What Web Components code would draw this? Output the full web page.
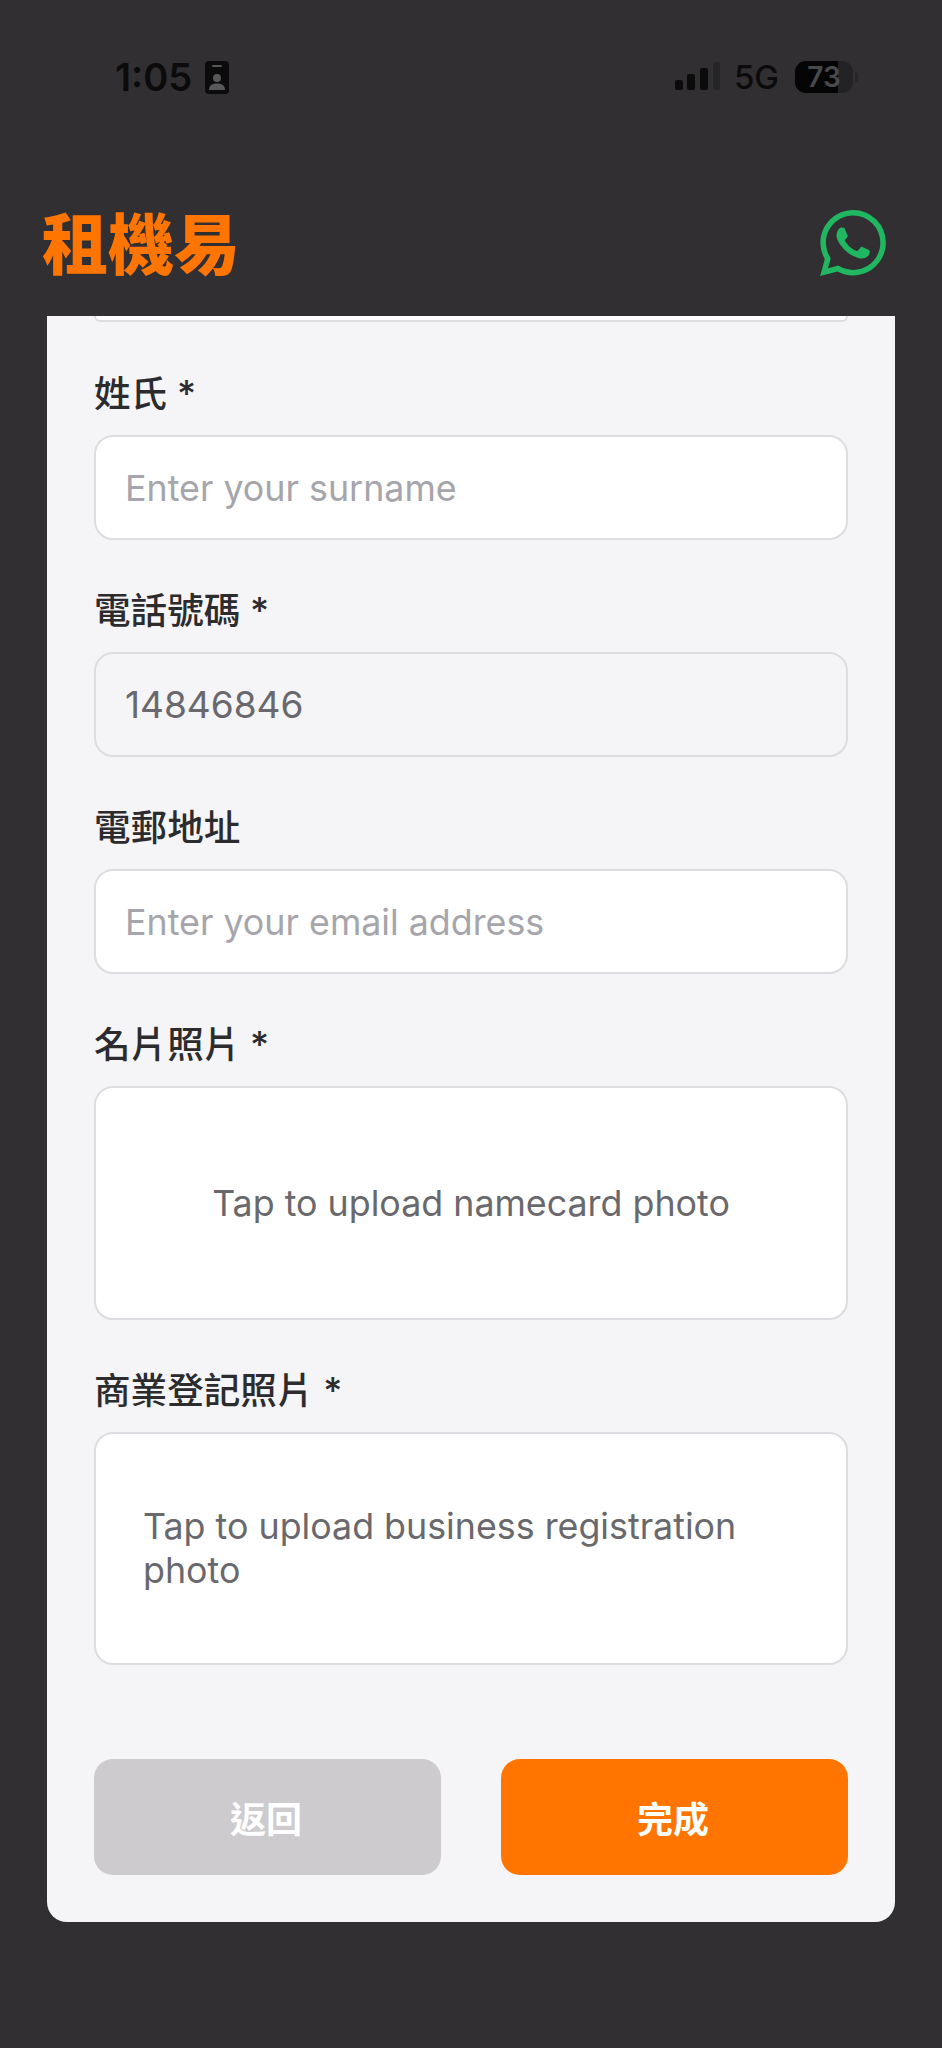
<!DOCTYPE html>
<html lang="zh-Hant">
<head>
<meta charset="utf-8">
<title>租機易</title>
<style>
html, body { margin: 0; background: #312f32; }
body { width: 942px; height: 2048px; overflow: hidden; font-family: Inter, "Noto Sans CJK TC", sans-serif; }
</style>
</head>
<body>
<status-bar></status-bar>
<app-header></app-header>
<form-card>
  <form-field label="姓氏 *"><text-box placeholder>Enter your surname</text-box></form-field>
  <form-field label="電話號碼 *"><text-box disabled>14846846</text-box></form-field>
  <form-field label="電郵地址"><text-box placeholder>Enter your email address</text-box></form-field>
  <form-field label="名片照片 *"><upload-box>Tap to upload namecard photo</upload-box></form-field>
  <form-field label="商業登記照片 *"><upload-box>Tap to upload business registration photo</upload-box></form-field>
  <div slot="actions" style="display:flex;justify-content:space-between">
    <action-button kind="back">返回</action-button>
    <action-button kind="done">完成</action-button>
  </div>
</form-card>

<script>
class StatusBar extends HTMLElement {
  constructor() {
    super();
    this.attachShadow({ mode: "open" });
    this.shadowRoot.innerHTML = `
<style>
:host { display: flex; justify-content: space-between; align-items: center; box-sizing: border-box; height: 34px; margin-top: 60px; padding: 0 84px 0 115px; color: #0b0b0c; font-family: Inter, sans-serif; }
.side { display: flex; align-items: center; }
.time { font-size: 38px; font-weight: 600; line-height: 34px; }
.net { font-size: 33px; font-weight: 500; margin: 0 16px 0 13px; line-height: 34px; }
.batt { position: relative; width: 58px; height: 32px; border-radius: 11px; overflow: hidden; background: #232224; display: flex; align-items: center; justify-content: center; font-size: 28px; font-weight: 600; color: #4a494c; }
.batt::before { content: ""; position: absolute; left: 0; top: 0; bottom: 0; width: 74%; background: #050505; }
.batt span { position: relative; }
.nub { width: 3px; height: 11px; margin-left: 2px; background: #262527; border-radius: 0 3px 3px 0; }
</style>
<div class="side">
  <span class="time">1:05</span>
  <svg width="24" height="33" viewBox="0 0 24 33" style="margin-left:13px"><rect width="24" height="33" rx="4" fill="#0b0b0c"/><rect x="7" y="4" width="10" height="2" rx="1" fill="#58575a"/><circle cx="12" cy="17" r="4" fill="#58575a"/><path d="M4 29c0-5 3.500-6.500 8-6.500s8 1.500 8 6.500z" fill="#58575a"/></svg>
</div>
<div class="side">
  <svg width="46" height="30" viewBox="0 0 46 30"><rect x="0" y="18" width="8" height="10" rx="2" fill="#0b0b0c"/><rect x="12" y="12" width="8" height="16" rx="2" fill="#0b0b0c"/><rect x="25" y="6" width="8" height="22" rx="2" fill="#0b0b0c"/><rect x="38" y="0" width="7" height="28" rx="2" fill="#252426"/></svg>
  <span class="net">5G</span>
  <div class="batt"><span>73</span></div>
  <div class="nub"></div>
</div>`;
  }
}
customElements.define("status-bar", StatusBar);

class AppHeader extends HTMLElement {
  constructor() {
    super();
    this.attachShadow({ mode: "open" });
    this.shadowRoot.innerHTML = `
<style>
:host { display: flex; justify-content: space-between; align-items: flex-start; box-sizing: border-box; height: 222px; padding: 116px 56px 0 42px; }
h1 { margin: -3px 0 0; color: #ff7500; font: 900 66px/1 "Noto Sans CJK TC", sans-serif; }
svg { display: block; }
</style>
<h1>租機易</h1>
<svg width="66" height="66" viewBox="0 0 24 24" fill="#21b660"><path d="M17.472 14.382c-.297-.149-1.758-.867-2.03-.967-.273-.099-.471-.148-.67.15-.197.297-.767.966-.94 1.164-.173.199-.347.223-.644.075-.297-.15-1.255-.463-2.39-1.475-.883-.788-1.48-1.761-1.653-2.059-.173-.297-.018-.458.13-.606.134-.133.298-.347.446-.52.149-.174.198-.298.298-.497.099-.198.05-.371-.025-.52-.075-.149-.669-1.612-.916-2.207-.242-.579-.487-.5-.669-.51-.173-.008-.371-.01-.57-.01-.198 0-.52.074-.792.372-.272.297-1.04 1.016-1.04 2.479 0 1.462 1.065 2.875 1.213 3.074.149.198 2.096 3.2 5.077 4.487.709.306 1.262.489 1.694.625.712.227 1.36.195 1.871.118.571-.085 1.758-.719 2.006-1.413.248-.694.248-1.289.173-1.413-.074-.124-.272-.198-.57-.347m-5.421 7.403h-.004a9.87 9.87 0 01-5.031-1.378l-.361-.214-3.741.982.998-3.648-.235-.374a9.86 9.86 0 01-1.51-5.26c.001-5.45 4.436-9.884 9.888-9.884 2.64 0 5.122 1.03 6.988 2.898a9.825 9.825 0 012.893 6.994c-.003 5.45-4.437 9.884-9.885 9.884m8.413-18.297A11.815 11.815 0 0012.05 0C5.495 0 .16 5.335.157 11.892c0 2.096.547 4.142 1.588 5.945L.057 24l6.305-1.654a11.882 11.882 0 005.683 1.448h.005c6.554 0 11.89-5.335 11.893-11.893a11.821 11.821 0 00-3.48-8.413z"/></svg>`;
  }
}
customElements.define("app-header", AppHeader);

class FormCard extends HTMLElement {
  constructor() {
    super();
    this.attachShadow({ mode: "open" });
    this.shadowRoot.innerHTML = `
<style>
:host { display: block; box-sizing: border-box; width: 848px; margin-left: 47px; padding: 0 47px 47px; background: #f5f4f7; border-radius: 0 0 20px 20px; }
.sliver { height: 6px; box-sizing: border-box; border: 2px solid #dddce0; border-top: 0; border-radius: 0 0 16px 16px; background: #fff; }
.fields { display: flex; flex-direction: column; gap: 48px; padding-top: 49px; }
.actions { margin-top: 94px; }
</style>
<div class="sliver"></div>
<div class="fields"><slot></slot></div>
<div class="actions"><slot name="actions"></slot></div>`;
  }
}
customElements.define("form-card", FormCard);

class FormField extends HTMLElement {
  constructor() {
    super();
    this.attachShadow({ mode: "open" });
    this.shadowRoot.innerHTML = `
<style>
:host { display: block; }
label { display: block; height: 64px; line-height: 47px; font-size: 36.6px; font-weight: 500; color: #2c2b2e; font-family: Inter, "Noto Sans CJK TC", sans-serif; }
</style>
<label></label>
<slot></slot>`;
  }
  connectedCallback() {
    this.shadowRoot.querySelector("label").textContent = this.getAttribute("label");
  }
}
customElements.define("form-field", FormField);

class TextBox extends HTMLElement {
  constructor() {
    super();
    this.attachShadow({ mode: "open" });
    this.shadowRoot.innerHTML = `
<style>
:host { display: flex; align-items: center; box-sizing: border-box; height: 105px; padding: 0 29px; background: #fff; border: 2px solid #dddce0; border-radius: 19px; color: #69686d; font-size: 35.8px; font-family: Inter, sans-serif; }
:host([placeholder]) { color: #a6a5ab; }
:host([disabled]) { background: #f5f4f7; font-size: 37px; }
</style>
<slot></slot>`;
  }
}
customElements.define("text-box", TextBox);

class UploadBox extends HTMLElement {
  constructor() {
    super();
    this.attachShadow({ mode: "open" });
    this.shadowRoot.innerHTML = `
<style>
:host { display: flex; align-items: center; justify-content: center; box-sizing: border-box; height: 233.5px; padding: 0 47px; background: #fff; border: 2px solid #dddce0; border-radius: 19px; color: #69686d; font-size: 35.8px; line-height: 44px; font-family: Inter, sans-serif; }
</style>
<div><slot></slot></div>`;
  }
}
customElements.define("upload-box", UploadBox);

class ActionButton extends HTMLElement {
  constructor() {
    super();
    this.attachShadow({ mode: "open" });
    this.shadowRoot.innerHTML = `
<style>
:host { display: flex; align-items: center; justify-content: center; box-sizing: border-box; width: 347px; height: 116px; padding-right: 3px; border-radius: 19px; background: #cdcbce; color: #fff; font: 700 36px "Noto Sans CJK TC", sans-serif; }
:host([kind="done"]) { background: #ff7500; }
</style>
<slot></slot>`;
  }
}
customElements.define("action-button", ActionButton);
</script>
</body>
</html>
